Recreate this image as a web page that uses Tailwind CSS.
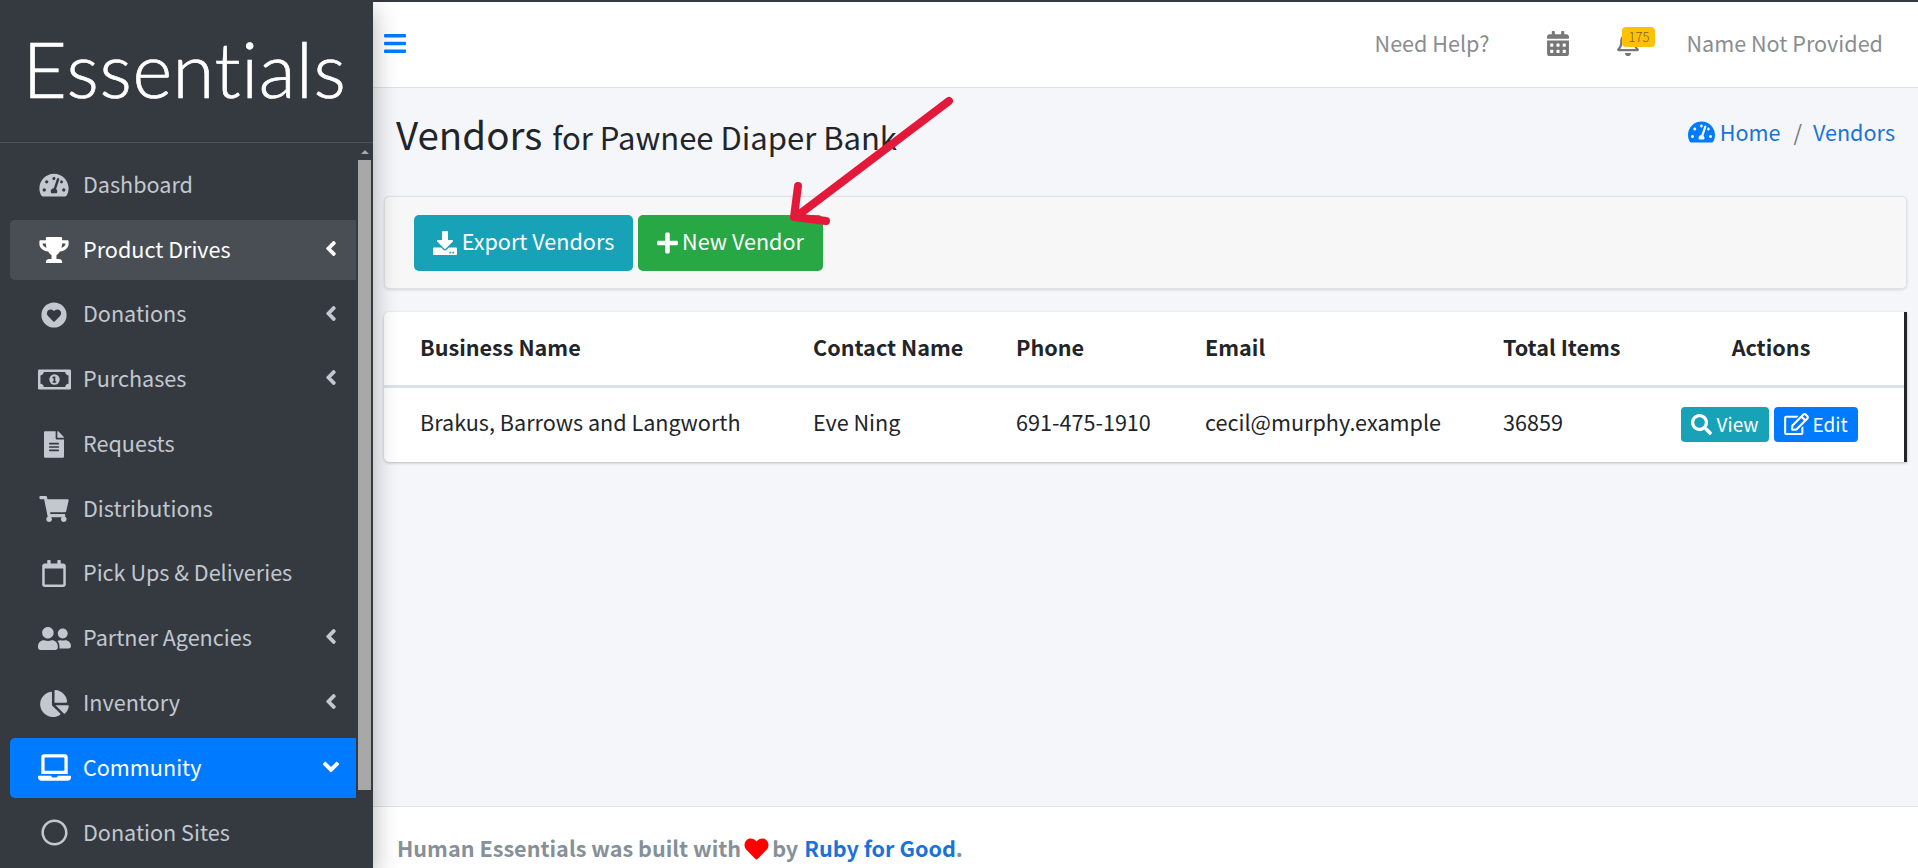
<!DOCTYPE html>
<html lang="en">
<head>
    <meta charset="UTF-8">
    <title>Vendors</title>
    <script src="https://cdn.jsdelivr.net/npm/@tailwindcss/browser@4"></script>
</head>
<body class="bg-[#f4f6f9] font-['Noto_Sans_CJK_SC','Noto_Sans',sans-serif] text-[#212529]">
<div class="relative flex h-[868px] w-[1918px] overflow-hidden">

    <!-- Sidebar -->
    <aside class="relative z-10 flex h-full w-[373px] shrink-0 flex-col bg-[#343a40] shadow-[0_10px_24px_rgba(0,0,0,0.3)]">
        <div class="flex h-[143px] shrink-0 items-center justify-center border-b border-[#4b545c] pr-[4px] pb-[4px]">
            <span class="font-['Lato',sans-serif] text-[76px] leading-none font-light tracking-[0.6px] text-white [-webkit-text-stroke:0.7px_white] [font-variant-ligatures:none]">Essentials</span>
        </div>
        <div class="flex min-h-0 flex-1">
            <ul class="ml-[10px] w-[346px] pt-[12px] text-[21.6px] text-[#c2c7d0]">
                <li class="mb-[4.75px] flex h-[60px] items-center rounded-l-[5px]">
                    <span class="ml-[27px] flex w-[34px] justify-center"><svg class="h-[26px] w-[30px] fill-current" viewBox="0 0 576 512"><path d="M288 32C128.94 32 0 160.94 0 320c0 52.8 14.25 102.26 39.06 144.8 5.61 9.62 16.3 15.2 27.44 15.2h443c11.14 0 21.83-5.58 27.44-15.2C561.75 422.26 576 372.8 576 320c0-159.06-128.94-288-288-288zm0 64c14.71 0 26.58 10.13 30.32 23.65-1.11 2.26-2.64 4.23-3.45 6.67l-9.22 27.67c-5.13 3.49-10.97 6.01-17.64 6.01-17.67 0-32-14.33-32-32S270.33 96 288 96zM96 384c-17.67 0-32-14.33-32-32s14.33-32 32-32 32 14.33 32 32-14.33 32-32 32zm48-160c-17.67 0-32-14.33-32-32s14.33-32 32-32 32 14.33 32 32-14.33 32-32 32zm246.77-72.41l-61.33 184C343.13 347.33 352 364.54 352 384c0 11.72-3.38 22.55-8.88 32H232.88c-5.5-9.45-8.88-20.28-8.88-32 0-33.94 26.5-61.43 59.9-63.59l61.34-184.01c4.17-12.56 17.73-19.45 30.36-15.17 12.57 4.19 19.35 17.77 15.17 30.36zm14.66 57.2l15.52-46.55c3.47-1.29 7.13-2.23 11.05-2.23 17.67 0 32 14.33 32 32s-14.33 32-32 32c-11.38-.01-20.89-6.28-26.57-15.22zM480 384c-17.67 0-32-14.33-32-32s14.33-32 32-32 32 14.33 32 32-14.33 32-32 32z"/></svg></span>
                    <span class="mb-[2px] ml-[12px]">Dashboard</span>
                </li>
                <li class="mb-[4.75px] flex h-[60px] items-center rounded-l-[5px] bg-white/10 text-white">
                    <span class="ml-[27px] flex w-[34px] justify-center"><svg class="h-[26px] w-[30px] fill-current" viewBox="0 0 576 512"><path d="M552 64H448V24c0-13.3-10.7-24-24-24H152c-13.3 0-24 10.7-24 24v40H24C10.7 64 0 74.7 0 88v56c0 35.7 22.5 72.4 61.9 100.7 31.5 22.7 69.8 37.1 110 41.7C203.3 338.5 240 360 240 360v72h-48c-35.3 0-64 20.7-64 56v12c0 6.6 5.4 12 12 12h296c6.6 0 12-5.4 12-12v-12c0-35.3-28.7-56-64-56h-48v-72s36.7-21.5 68.1-73.6c40.3-4.6 78.6-19 110-41.7 39.3-28.3 61.9-65 61.9-100.7V88c0-13.3-10.7-24-24-24zM99.3 192.8C74.9 175.2 64 155.6 64 144v-16h64.2c1 32.6 5.8 61.2 12.8 86.2-15.1-5.2-29.2-12.4-41.7-21.4zM512 144c0 16.1-17.7 36.1-35.3 48.8-12.5 9-26.7 16.2-41.8 21.4 7-25 11.8-53.6 12.8-86.2H512v16z"/></svg></span>
                    <span class="mb-[2px] ml-[12px]">Product Drives</span>
                    <svg class="mr-[19px] mb-[3px] ml-auto h-[25px] w-[12px] fill-current" viewBox="0 0 256 512"><path d="M31.7 239l136-136c9.4-9.4 24.6-9.4 33.9 0l22.6 22.6c9.4 9.4 9.4 24.6 0 33.9L127.9 256l96.4 96.4c9.4 9.4 9.4 24.6 0 33.9L201.7 409c-9.4 9.4-24.6 9.4-33.9 0l-136-136c-9.5-9.4-9.5-24.6-.1-34z"/></svg>
                </li>
                <li class="mb-[4.75px] flex h-[60px] items-center rounded-l-[5px]">
                    <span class="ml-[27px] flex w-[34px] justify-center"><svg class="h-[26px] w-[26px]" viewBox="0 0 512 512"><circle class="fill-[#c2c7d0]" cx="256" cy="256" r="248"/><path class="fill-[#343a40]" transform="translate(116 128) scale(0.547)" d="M462.3 62.6C407.5 15.9 326 24.3 275.7 76.2L256 96.5l-19.7-20.3C186.1 24.3 104.5 15.9 49.7 62.6c-62.8 53.6-66.1 149.8-9.9 207.9l193.5 199.8c12.5 12.9 32.8 12.9 45.3 0l193.5-199.8c56.3-58.1 53-154.3-9.8-207.9z"/></svg></span>
                    <span class="mb-[2px] ml-[12px]">Donations</span>
                    <svg class="mr-[19px] mb-[3px] ml-auto h-[25px] w-[12px] fill-current" viewBox="0 0 256 512"><path d="M31.7 239l136-136c9.4-9.4 24.6-9.4 33.9 0l22.6 22.6c9.4 9.4 9.4 24.6 0 33.9L127.9 256l96.4 96.4c9.4 9.4 9.4 24.6 0 33.9L201.7 409c-9.4 9.4-24.6 9.4-33.9 0l-136-136c-9.5-9.4-9.5-24.6-.1-34z"/></svg>
                </li>
                <li class="mb-[4.75px] flex h-[60px] items-center rounded-l-[5px]">
                    <span class="ml-[27px] flex w-[34px] justify-center"><svg class="h-[27px] w-[33px]" viewBox="0 0 640 512"><rect class="fill-[#c2c7d0]" y="64" width="640" height="384" rx="24"/><path class="fill-[#343a40]" d="M112 112h416c0 35 29 64 64 64v160c-35 0-64 29-64 64H112c0-35-29-64-64-64V176c35 0 64-29 64-64z"/><circle class="fill-[#c2c7d0]" cx="320" cy="256" r="100"/><path class="fill-[#343a40]" d="M300 196h36v96h18v28h-72v-28h20v-62l-16 8-10-24z"/></svg></span>
                    <span class="mb-[2px] ml-[12px]">Purchases</span>
                    <svg class="mr-[19px] mb-[3px] ml-auto h-[25px] w-[12px] fill-current" viewBox="0 0 256 512"><path d="M31.7 239l136-136c9.4-9.4 24.6-9.4 33.9 0l22.6 22.6c9.4 9.4 9.4 24.6 0 33.9L127.9 256l96.4 96.4c9.4 9.4 9.4 24.6 0 33.9L201.7 409c-9.4 9.4-24.6 9.4-33.9 0l-136-136c-9.5-9.4-9.5-24.6-.1-34z"/></svg>
                </li>
                <li class="mb-[4.75px] flex h-[60px] items-center rounded-l-[5px]">
                    <span class="ml-[27px] flex w-[34px] justify-center"><svg class="h-[27px] w-[20px] fill-current" viewBox="0 0 384 512"><path d="M224 136V0H24C10.7 0 0 10.7 0 24v464c0 13.3 10.7 24 24 24h336c13.3 0 24-10.7 24-24V160H248c-13.2 0-24-10.8-24-24zm64 236c0 6.6-5.4 12-12 12H108c-6.6 0-12-5.4-12-12v-8c0-6.6 5.4-12 12-12h168c6.6 0 12 5.4 12 12v8zm0-64c0 6.6-5.4 12-12 12H108c-6.6 0-12-5.4-12-12v-8c0-6.6 5.4-12 12-12h168c6.6 0 12 5.4 12 12v8zm0-72v8c0 6.6-5.4 12-12 12H108c-6.6 0-12-5.4-12-12v-8c0-6.6 5.4-12 12-12h168c6.6 0 12 5.4 12 12zm96-114.1v6.1H256V0h6.1c6.4 0 12.5 2.5 17 7l97.9 98c4.5 4.5 7 10.6 7 16.9z"/></svg></span>
                    <span class="mb-[2px] ml-[12px]">Requests</span>
                </li>
                <li class="mb-[4.75px] flex h-[60px] items-center rounded-l-[5px]">
                    <span class="ml-[27px] flex w-[34px] justify-center"><svg class="h-[26px] w-[30px] fill-current" viewBox="0 0 576 512"><path d="M528.12 301.319l47.273-208C578.806 78.301 567.391 64 551.99 64H159.208l-9.166-44.81C147.758 8.021 137.93 0 126.529 0H24C10.745 0 0 10.745 0 24v16c0 13.255 10.745 24 24 24h69.883l70.248 343.435C147.325 417.1 136 435.222 136 456c0 30.928 25.072 56 56 56s56-25.072 56-56c0-15.674-6.447-29.835-16.824-40h209.647C430.447 426.165 424 440.326 424 456c0 30.928 25.072 56 56 56s56-25.072 56-56c0-22.172-12.888-41.332-31.579-50.405l5.517-24.276c3.413-15.018-8.002-29.319-23.403-29.319H218.117l-6.545-32h293.145c11.206 0 20.92-7.754 23.403-18.681z"/></svg></span>
                    <span class="mb-[2px] ml-[12px]">Distributions</span>
                </li>
                <li class="mb-[4.75px] flex h-[60px] items-center rounded-l-[5px]">
                    <span class="ml-[27px] flex w-[34px] justify-center"><svg class="h-[27px] w-[24px] fill-current" viewBox="0 0 448 512"><path d="M400 64h-48V12c0-6.6-5.4-12-12-12h-40c-6.6 0-12 5.4-12 12v52H160V12c0-6.6-5.4-12-12-12h-40c-6.6 0-12 5.4-12 12v52H48C21.5 64 0 85.5 0 112v352c0 26.5 21.5 48 48 48h352c26.5 0 48-21.5 48-48V112c0-26.5-21.5-48-48-48zm-6 400H54c-3.3 0-6-2.7-6-6V160h352v298c0 3.3-2.7 6-6 6z"/></svg></span>
                    <span class="mb-[2px] ml-[12px]">Pick Ups &amp; Deliveries</span>
                </li>
                <li class="mb-[4.75px] flex h-[60px] items-center rounded-l-[5px]">
                    <span class="ml-[27px] flex w-[34px] justify-center"><svg class="h-[27px] w-[33px] fill-current" viewBox="0 0 640 512"><path d="M192 256c61.9 0 112-50.1 112-112S253.9 32 192 32 80 82.1 80 144s50.1 112 112 112zm76.8 32h-8.3c-20.8 10-43.9 16-68.5 16s-47.6-6-68.5-16h-8.3C51.6 288 0 339.6 0 403.2V432c0 26.5 21.5 48 48 48h288c26.5 0 48-21.5 48-48v-28.8c0-63.6-51.6-115.2-115.2-115.2zM480 256c53 0 96-43 96-96s-43-96-96-96-96 43-96 96 43 96 96 96zm48 32h-3.8c-13.9 4.8-28.6 8-44.2 8s-30.3-3.2-44.2-8H432c-20.4 0-39.2 5.9-55.7 15.4 24.4 26.3 39.7 61.2 39.7 99.8v38.4c0 2.2-.5 4.3-.6 6.4H592c26.5 0 48-21.5 48-48 0-61.9-50.1-112-112-112z"/></svg></span>
                    <span class="mb-[2px] ml-[12px]">Partner Agencies</span>
                    <svg class="mr-[19px] mb-[3px] ml-auto h-[25px] w-[12px] fill-current" viewBox="0 0 256 512"><path d="M31.7 239l136-136c9.4-9.4 24.6-9.4 33.9 0l22.6 22.6c9.4 9.4 9.4 24.6 0 33.9L127.9 256l96.4 96.4c9.4 9.4 9.4 24.6 0 33.9L201.7 409c-9.4 9.4-24.6 9.4-33.9 0l-136-136c-9.5-9.4-9.5-24.6-.1-34z"/></svg>
                </li>
                <li class="mb-[4.75px] flex h-[60px] items-center rounded-l-[5px]">
                    <span class="ml-[27px] flex w-[34px] justify-center"><svg class="h-[27px] w-[29px] fill-current" viewBox="0 0 544 512"><path d="M527.79 288H290.5l158.03 158.03c6.04 6.04 15.98 6.53 22.19.68 38.7-36.46 65.32-85.61 73.13-140.86 1.34-9.46-6.51-17.85-16.06-17.85zm-15.83-64.8C503.72 103.74 408.26 8.28 288.8.04 279.68-.59 272 7.1 272 16.24V240h223.77c9.14 0 16.82-7.68 16.19-16.8zM224 288V50.71c0-9.55-8.39-17.4-17.84-16.06C86.99 51.49-4.1 155.6.14 280.37 4.5 408.51 114.83 513.59 243.03 511.98c50.4-.63 96.97-16.87 135.26-44.03 7.9-5.6 8.42-17.23 1.57-24.08L224 288z"/></svg></span>
                    <span class="mb-[2px] ml-[12px]">Inventory</span>
                    <svg class="mr-[19px] mb-[3px] ml-auto h-[25px] w-[12px] fill-current" viewBox="0 0 256 512"><path d="M31.7 239l136-136c9.4-9.4 24.6-9.4 33.9 0l22.6 22.6c9.4 9.4 9.4 24.6 0 33.9L127.9 256l96.4 96.4c9.4 9.4 9.4 24.6 0 33.9L201.7 409c-9.4 9.4-24.6 9.4-33.9 0l-136-136c-9.5-9.4-9.5-24.6-.1-34z"/></svg>
                </li>
                <li class="mb-[4.75px] flex h-[60px] items-center rounded-l-[5px] bg-[#007bff] text-white">
                    <span class="ml-[27px] flex w-[34px] justify-center"><svg class="h-[27px] w-[33px] fill-current" viewBox="0 0 640 512"><path d="M624 416H381.54c-.74 19.81-14.71 32-32.74 32H288c-18.69 0-33.02-17.47-32.77-32H16c-8.8 0-16 7.2-16 16v16c0 35.2 28.8 64 64 64h512c35.2 0 64-28.8 64-64v-16c0-8.8-7.2-16-16-16zM576 48c0-26.4-21.6-48-48-48H112C85.6 0 64 21.6 64 48v336h512V48zm-64 272H128V64h384v256z"/></svg></span>
                    <span class="mb-[2px] ml-[12px]">Community</span>
                    <svg class="mr-[17px] mb-[2px] ml-auto h-[26px] w-[16px] fill-current" viewBox="0 0 320 512"><path d="M143 352.3L7 216.3c-9.4-9.4-9.4-24.6 0-33.9l22.6-22.6c9.4-9.4 24.6-9.4 33.9 0l96.4 96.4 96.4-96.4c9.4-9.4 24.6-9.4 33.9 0l22.6 22.6c9.4 9.4 9.4 24.6 0 33.9l-136 136c-9.2 9.4-24.4 9.4-33.8 0z"/></svg>
                </li>
                <li class="mb-[4.75px] flex h-[60px] items-center rounded-l-[5px]">
                    <span class="ml-[27px] flex w-[34px] justify-center"><svg class="h-[27px] w-[27px] fill-current" viewBox="0 0 512 512"><path d="M256 8C119 8 8 119 8 256s111 248 248 248 248-111 248-248S393 8 256 8zm0 448c-110.5 0-200-89.5-200-200S145.5 56 256 56s200 89.5 200 200-89.5 200-200 200z"/></svg></span>
                    <span class="ml-[12px]">Donation Sites</span>
                </li>
            </ul>
            <!-- Scrollbar -->
            <div class="ml-[2px] flex w-[13px] flex-col items-center pt-[7px]">
                <div class="h-0 w-0 border-x-[4px] border-b-[4px] border-x-transparent border-b-[#a8a8a8]"></div>
                <div class="mt-[6px] h-[630px] w-full bg-[#a8a8a8]"></div>
            </div>
        </div>
    </aside>

    <!-- Main -->
    <div class="flex min-w-0 flex-1 flex-col">
        <header class="flex h-[88px] shrink-0 items-center border-t-2 border-b border-t-[#343a40] border-b-[#dee2e6] bg-white pb-[3px] text-[21.6px] text-[#8a8d90]">
            <svg class="ml-[11px] h-[25px] w-[22px] fill-[#007bff]" viewBox="0 0 448 512"><path d="M16 132h416c8.837 0 16-7.163 16-16V76c0-8.837-7.163-16-16-16H16C7.163 60 0 67.163 0 76v40c0 8.837 7.163 16 16 16zm0 160h416c8.837 0 16-7.163 16-16v-40c0-8.837-7.163-16-16-16H16c-8.837 0-16 7.163-16 16v40c0 8.837 7.163 16 16 16zm0 160h416c8.837 0 16-7.163 16-16v-40c0-8.837-7.163-16-16-16H16c-8.837 0-16 7.163-16 16v40c0 8.837 7.163 16 16 16z"/></svg>
            <span class="ml-auto">Need Help?</span>
            <svg class="ml-[58px] h-[25px] w-[22px] fill-[#777]" viewBox="0 0 448 512"><path d="M0 464c0 26.5 21.5 48 48 48h352c26.5 0 48-21.5 48-48V192H0v272zm320-196c0-6.6 5.4-12 12-12h40c6.6 0 12 5.4 12 12v40c0 6.6-5.4 12-12 12h-40c-6.6 0-12-5.4-12-12v-40zm0 128c0-6.6 5.4-12 12-12h40c6.6 0 12 5.4 12 12v40c0 6.6-5.4 12-12 12h-40c-6.6 0-12-5.4-12-12v-40zM192 268c0-6.6 5.4-12 12-12h40c6.6 0 12 5.4 12 12v40c0 6.6-5.4 12-12 12h-40c-6.6 0-12-5.4-12-12v-40zm0 128c0-6.6 5.4-12 12-12h40c6.6 0 12 5.4 12 12v40c0 6.6-5.4 12-12 12h-40c-6.6 0-12-5.4-12-12v-40zM64 268c0-6.6 5.4-12 12-12h40c6.6 0 12 5.4 12 12v40c0 6.6-5.4 12-12 12H76c-6.6 0-12-5.4-12-12v-40zm0 128c0-6.6 5.4-12 12-12h40c6.6 0 12 5.4 12 12v40c0 6.6-5.4 12-12 12H76c-6.6 0-12-5.4-12-12v-40zM400 64h-48V16c0-8.8-7.2-16-16-16h-32c-8.8 0-16 7.2-16 16v48H160V16c0-8.8-7.2-16-16-16h-32c-8.8 0-16 7.2-16 16v48H48C21.5 64 0 85.5 0 112v48h448v-48c0-26.5-21.5-48-48-48z"/></svg>
            <span class="relative ml-[48px] block h-[25px] w-[22px]">
                <svg class="h-[25px] w-[22px] fill-[#777]" viewBox="0 0 448 512"><path d="M439.39 362.29c-19.32-20.76-55.47-51.99-55.47-154.29 0-77.7-54.48-139.9-127.94-155.16V32c0-17.67-14.32-32-31.98-32s-31.98 14.33-31.98 32v20.84C118.56 68.1 64.08 130.3 64.08 208c0 102.3-36.15 133.53-55.47 154.29-6 6.45-8.66 14.16-8.61 21.71.11 16.4 12.98 32 32.1 32h383.8c19.12 0 32-15.6 32.1-32 .05-7.55-2.61-15.27-8.61-21.71zM67.53 368c21.22-27.97 44.42-74.33 44.53-159.42 0-.2-.06-.38-.06-.58 0-61.86 50.14-112 112-112s112 50.14 112 112c0 .2-.06.38-.06.58.11 85.1 23.31 131.46 44.53 159.42H67.53zM224 512c35.32 0 63.97-28.65 63.97-64H160.03c0 35.35 28.65 64 63.97 64z"/></svg>
                <span class="absolute top-[-4px] left-[5px] flex h-[20px] w-[33px] items-center justify-center rounded-[4px] bg-[#ffc107] text-[13px] font-light text-[#7a6420]">175</span>
            </span>
            <span class="mr-[35px] ml-[47px]">Name Not Provided</span>
        </header>

        <main class="min-h-0 flex-1 px-[11px]">
            <div class="flex h-[108px] items-start justify-between pt-[17px] pr-[12px] pl-[12px]">
                <h1 class="flex items-baseline gap-[10px] text-[38.5px] leading-[56px] font-normal">Vendors <span class="text-[31px]">for Pawnee Diaper Bank</span></h1>
                <nav class="mt-[11px] flex items-center text-[21.6px] text-[#1a73d9]">
                    <svg class="h-[24px] w-[27px] fill-[#007bff]" viewBox="0 0 576 512"><path d="M288 32C128.94 32 0 160.94 0 320c0 52.8 14.25 102.26 39.06 144.8 5.61 9.62 16.3 15.2 27.44 15.2h443c11.14 0 21.83-5.58 27.44-15.2C561.75 422.26 576 372.8 576 320c0-159.06-128.94-288-288-288zm0 64c14.71 0 26.58 10.13 30.32 23.65-1.11 2.26-2.64 4.23-3.45 6.67l-9.22 27.67c-5.13 3.49-10.97 6.01-17.64 6.01-17.67 0-32-14.33-32-32S270.33 96 288 96zM96 384c-17.67 0-32-14.33-32-32s14.33-32 32-32 32 14.33 32 32-14.33 32-32 32zm48-160c-17.67 0-32-14.33-32-32s14.33-32 32-32 32 14.33 32 32-14.33 32-32 32zm246.77-72.41l-61.33 184C343.13 347.33 352 364.54 352 384c0 11.72-3.38 22.55-8.88 32H232.88c-5.5-9.45-8.88-20.28-8.88-32 0-33.94 26.5-61.43 59.9-63.59l61.34-184.01c4.17-12.56 17.73-19.45 30.36-15.17 12.57 4.19 19.35 17.77 15.17 30.36zm14.66 57.2l15.52-46.55c3.47-1.29 7.13-2.23 11.05-2.23 17.67 0 32 14.33 32 32s-14.33 32-32 32c-11.38-.01-20.89-6.28-26.57-15.22zM480 384c-17.67 0-32-14.33-32-32s14.33-32 32-32 32 14.33 32 32-14.33 32-32 32z"/></svg>
                    <span class="ml-[5px]">Home</span>
                    <span class="mr-[11px] ml-[13px] text-[#6c757d]">/</span>
                    <span>Vendors</span>
                </nav>
            </div>

            <div class="flex h-[93px] items-center gap-[5px] rounded-[5px] border border-[#dfe1e4] bg-[#f7f7f7] pl-[29px] shadow-[0_1px_3px_rgba(0,0,0,0.12)]">
                <span class="flex h-[56px] w-[219px] items-center justify-center gap-[5px] rounded-[5px] bg-[#17a2b8] text-[21.6px] text-white">
                    <svg class="h-[24px] w-[24px] fill-current" viewBox="0 0 512 512"><path d="M216 0h80c13.3 0 24 10.7 24 24v168h87.7c17.8 0 26.7 21.5 14.1 34.1L269.7 378.3c-7.5 7.5-19.8 7.5-27.3 0L90.1 226.1c-12.6-12.6-3.7-34.1 14.1-34.1H192V24c0-13.3 10.7-24 24-24zm296 376v112c0 13.3-10.7 24-24 24H24c-13.3 0-24-10.7-24-24V376c0-13.3 10.7-24 24-24h146.7l49 49c20.1 20.1 52.5 20.1 72.6 0l49-49H488c13.3 0 24 10.7 24 24zm-124 88c0-11-9-20-20-20s-20 9-20 20 9 20 20 20 20-9 20-20zm64 0c0-11-9-20-20-20s-20 9-20 20 9 20 20 20 20-9 20-20z"/></svg>
                    <span class="mb-[2px]">Export Vendors</span>
                </span>
                <span class="flex h-[56px] w-[185px] items-center justify-center gap-[4px] rounded-[5px] bg-[#28a745] text-[21.6px] text-white">
                    <svg class="h-[24px] w-[21px] fill-current" viewBox="0 0 448 512"><path d="M416 208H272V64c0-17.67-14.33-32-32-32h-32c-17.67 0-32 14.33-32 32v144H32c-17.67 0-32 14.33-32 32v32c0 17.67 14.33 32 32 32h144v144c0 17.67 14.33 32 32 32h32c17.67 0 32-14.33 32-32V304h144c17.67 0 32-14.33 32-32v-32c0-17.67-14.33-32-32-32z"/></svg>
                    <span class="mb-[2px]">New Vendor</span>
                </span>
            </div>

            <div class="mt-[23px] h-[150px] overflow-hidden rounded-l-[5px] border-r-[3px] border-r-[#212529] bg-white shadow-[0_1px_3px_rgba(0,0,0,0.25)]">
                <table class="w-[1520px] table-fixed border-collapse text-left text-[21.6px]">
                    <colgroup>
                        <col class="w-[392px]"><col class="w-[203px]"><col class="w-[189px]"><col class="w-[298px]"><col class="w-[174px]"><col class="w-[264px]">
                    </colgroup>
                    <thead>
                        <tr class="h-[74px] border-b-[3px] border-b-[#dee2e6]">
                            <th class="pb-[3px] pl-[36px] font-bold">Business Name</th>
                            <th class="pb-[3px] pl-[37px] font-bold">Contact Name</th>
                            <th class="pb-[3px] pl-[37px] font-bold">Phone</th>
                            <th class="pb-[3px] pl-[37px] font-bold">Email</th>
                            <th class="pb-[3px] pl-[37px] font-bold">Total Items</th>
                            <th class="pr-[2px] pb-[3px] text-center font-bold">Actions</th>
                        </tr>
                    </thead>
                    <tbody>
                        <tr class="h-[75px]">
                            <td class="pb-[5px] pl-[36px]">Brakus, Barrows and Langworth</td>
                            <td class="pb-[5px] pl-[37px]">Eve Ning</td>
                            <td class="pb-[5px] pl-[37px]">691-475-1910</td>
                            <td class="pb-[5px] pl-[37px]">cecil@murphy.example</td>
                            <td class="pb-[5px] pl-[37px]">36859</td>
                            <td>
                                <div class="flex justify-center gap-[5px] pr-[5px] text-[19px] text-white">
                                    <span class="flex h-[35px] w-[88px] items-center justify-center gap-[4px] rounded-[4px] bg-[#17a2b8]">
                                        <svg class="h-[21px] w-[21px] fill-current" viewBox="0 0 512 512"><path d="M505 442.7L405.3 343c-4.5-4.5-10.6-7-17-7H372c27.6-35.3 44-79.7 44-128C416 93.1 322.9 0 208 0S0 93.1 0 208s93.1 208 208 208c48.3 0 92.7-16.4 128-44v16.3c0 6.4 2.5 12.5 7 17l99.7 99.7c9.4 9.4 24.6 9.4 33.9 0l28.3-28.3c9.4-9.4 9.4-24.6.1-34zM208 336c-70.7 0-128-57.2-128-128 0-70.7 57.2-128 128-128 70.7 0 128 57.2 128 128 0 70.7-57.2 128-128 128z"/></svg>
                                        View
                                    </span>
                                    <span class="flex h-[35px] w-[84px] items-center justify-center gap-[3px] rounded-[4px] bg-[#007bff]">
                                        <svg class="h-[22px] w-[25px] fill-current" viewBox="0 0 576 512"><path d="M402.3 344.9l32-32c5-5 13.7-1.5 13.7 5.7V464c0 26.5-21.5 48-48 48H48c-26.5 0-48-21.5-48-48V112c0-26.5 21.5-48 48-48h273.5c7.1 0 10.7 8.6 5.7 13.7l-32 32c-1.5 1.5-3.5 2.3-5.7 2.3H48v352h352V350.5c0-2.1.8-4.1 2.3-5.6zm156.6-201.8L296.3 405.7l-90.4 10c-26.2 2.9-48.5-19.2-45.6-45.6l10-90.4L432.9 17.1c22.9-22.9 59.9-22.9 82.7 0l43.2 43.2c22.9 22.9 22.9 60 .1 82.8zM460.1 174L402 115.9 216.2 301.8l-7.3 65.3 65.3-7.3L460.1 174zm64.8-79.7l-43.2-43.2c-4.1-4.1-10.8-4.1-14.8 0L436 82l58.1 58.1 30.9-30.9c4-4.2 4-10.8-.1-14.9z"/></svg>
                                        Edit
                                    </span>
                                </div>
                            </td>
                        </tr>
                    </tbody>
                </table>
            </div>
        </main>

        <footer class="flex h-[62px] shrink-0 items-center border-t border-t-[#dee2e6] bg-white pt-[22px] pl-[24px] text-[21.6px] font-bold text-[#869099]">
            Human Essentials was built with
            <svg class="mx-[3px] h-[24px] w-[25px] fill-[#ff0000]" viewBox="0 0 512 512"><path d="M462.3 62.6C407.5 15.9 326 24.3 275.7 76.2L256 96.5l-19.7-20.3C186.1 24.3 104.5 15.9 49.7 62.6c-62.8 53.6-66.1 149.8-9.9 207.9l193.5 199.8c12.5 12.9 32.8 12.9 45.3 0l193.5-199.8c56.3-58.1 53-154.3-9.8-207.9z"/></svg>
            by <span class="ml-[6px] text-[#1a73d9]">Ruby for Good</span>.
        </footer>
    </div>

    <!-- Red arrow annotation drawn over the page -->
    <svg class="pointer-events-none absolute top-0 left-0 z-20 h-[868px] w-[1918px]" viewBox="0 0 1918 868" fill="none">
        <path d="M949 101L797 216M798 186L794 217L826 221" stroke="#e4193a" stroke-width="8" stroke-linecap="round" stroke-linejoin="round"/>
    </svg>
</div>
</body>
</html>
